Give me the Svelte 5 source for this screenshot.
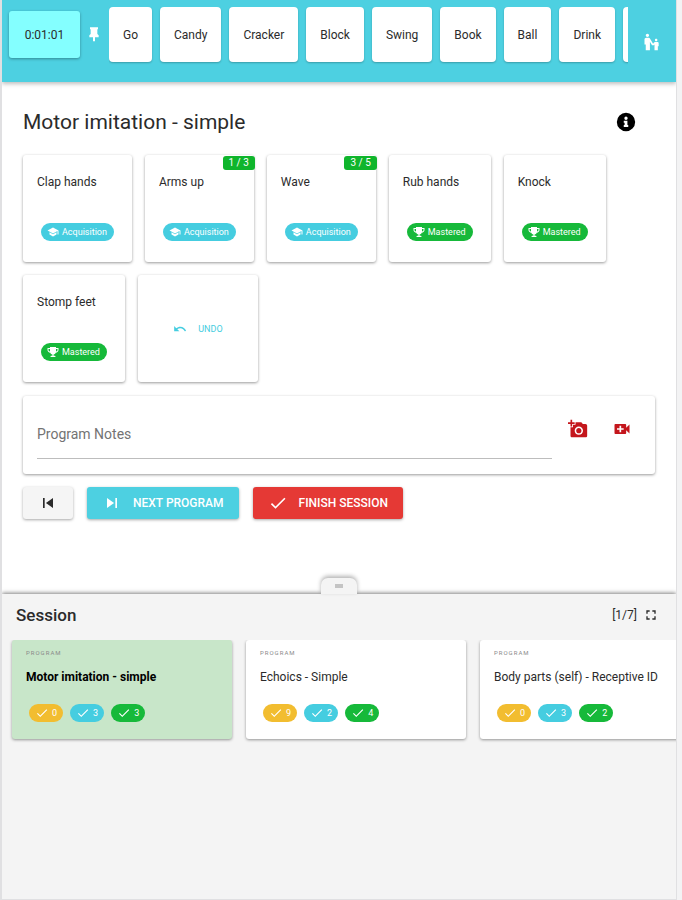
<script lang="ts">
  interface Target {
    name: string;
    status: 'acquisition' | 'mastered';
    progress?: string;
  }

  interface Program {
    name: string;
    counts: number[];
  }

  const ICONS = {
    pin: 'M17 12V5h1V2H6v3h1v7l-2 2v3h5.5v6h3v-6H19v-3l-2-2z',
    guardian:
      'M6.5 2c1.1 0 2 .9 2 2s-.9 2-2 2-2-.9-2-2 .9-2 2-2zM15.5 9.5c0 .83.67 1.5 1.5 1.5s1.5-.67 1.5-1.5S17.83 8 17 8s-1.5.67-1.5 1.5zM18.5 12h-2.84c-.58.01-1.14.32-1.45.86l-.92 1.32L9.72 8C9.35 7.37 8.69 7.01 8.01 7H5C3.9 7 3 7.9 3 9v6h1.5v7h5V11.61L12.03 16h2.2l.77-1.1V22h4v-5h1v-3.5c0-.82-.67-1.5-1.5-1.5z',
    info: 'M12 1a11 11 0 1 0 0 22 11 11 0 0 0 0-22zm0 4.5a2 2 0 1 1 0 4 2 2 0 0 1 0-4zM14.7 18H9.3v-2.4h1V13h-1v-2.4h4.4v5h1V18z',
    acquisition:
      'M12 3L1 9l11 6 9-4.91V17h2V9L12 3zM5 12.6v4.6L12 21l7-3.8v-4.6L12 16.4l-7-3.8z',
    mastered:
      'M18 2H6v2H1v4c0 3 2.4 5 5.6 5.4.8 1.9 2.2 3.2 4.2 3.6v2.6H9c-1.600 0-2 1-2 2.400h10c0-1.400-.4-2.400-2-2.400h-1.800V17c2-.4 3.400-1.700 4.200-3.600C20.600 13 23 11 23 8V4h-5V2zM3 6h3v4.800C4.200 10.400 3 9.400 3 8V6zm18 2c0 1.400-1.200 2.400-3 2.800V6h3v2z',
    undo: 'M12.5 8c-2.65 0-5.05 1-6.9 2.6L2 7v9h9l-3.62-3.62c1.39-1.16 3.16-1.88 5.12-1.88 3.54 0 6.55 2.31 7.6 5.5l2.37-.78C21.08 11.03 17.15 8 12.5 8z',
    photo:
      'M3 4V1h2v3h3v2H5v3H3V6H0V4h3zm3 6V7h3V4h7l1.83 2H21c1.1 0 2 .9 2 2v12c0 1.1-.9 2-2 2H5c-1.1 0-2-.9-2-2V10h3zm7 9c2.76 0 5-2.24 5-5s-2.24-5-5-5-5 2.24-5 5 2.24 5 5 5zm-3.2-5c0 1.77 1.43 3.2 3.2 3.2s3.2-1.43 3.2-3.2-1.43-3.2-3.2-3.2-3.2 1.43-3.2 3.2z',
    video:
      'M17 10.5V7c0-.55-.45-1-1-1H4c-.55 0-1 .45-1 1v10c0 .55.45 1 1 1h12c.55 0 1-.45 1-1v-3.5l4 4v-11l-4 4zM14 13h-3v3H9v-3H6v-2h3V8h2v3h3v2z',
    previous: 'M6 6h2v12H6zm3.5 6l8.500 6V6z',
    next: 'M6 18l8.500-6L6 6v12zM16 6v12h2V6h-2z',
    check: 'M9 16.17L4.83 12l-1.42 1.41L9 19 21 7l-1.41-1.41z',
    fullscreen:
      'M7 14H5v5h5v-2H7v-3zm-2-4h2V7h3V5H5v5zm12 7h-3v2h5v-5h-2v3zM14 5v2h3v3h2V5h-5z'
  };

  const pinned = ['Go', 'Candy', 'Cracker', 'Block', 'Swing', 'Book', 'Ball', 'Drink'];

  const targets: Target[] = [
    { name: 'Clap hands', status: 'acquisition' },
    { name: 'Arms up', status: 'acquisition', progress: '1 / 3' },
    { name: 'Wave', status: 'acquisition', progress: '3 / 5' },
    { name: 'Rub hands', status: 'mastered' },
    { name: 'Knock', status: 'mastered' },
    { name: 'Stomp feet', status: 'mastered' }
  ];

  const programs: Program[] = [
    { name: 'Motor imitation - simple', counts: [0, 3, 3] },
    { name: 'Echoics - Simple', counts: [9, 2, 4] },
    { name: 'Body parts (self) - Receptive ID', counts: [0, 3, 2] }
  ];

  const labels = { acquisition: 'Acquisition', mastered: 'Mastered' };
  const tones = ['baseline', 'acquisition', 'mastered'];

  let current = $state(0);
  let notes = $state('');
</script>

{#snippet icon(name: keyof typeof ICONS, size: number)}
  <svg width={size} height={size} viewBox="0 0 24 24" fill="currentColor" aria-hidden="true">
    <path fill-rule="evenodd" d={ICONS[name]} />
  </svg>
{/snippet}

<div class="app">
  <header class="topbar">
    <button class="timer">0:01:01</button>
    <span class="pin">{@render icon('pin', 16)}</span>
    <div class="pinned">
      {#each pinned as item}
        <button class="chip">{item}</button>
      {/each}
      <button class="chip" aria-label="More items"></button>
    </div>
    <button class="icon-button guardian" aria-label="Guardian">{@render icon('guardian', 20)}</button>
  </header>

  <main>
    <div class="title-row">
      <h1>Motor imitation - simple</h1>
      <button class="icon-button" aria-label="Program info">{@render icon('info', 20)}</button>
    </div>

    <div class="targets">
      {#each targets as target}
        <button class="card target">
          <span>{target.name}</span>
          <span class="badge {target.status}">
            {@render icon(target.status, 12)}
            {labels[target.status]}
          </span>
          {#if target.progress}
            <span class="progress">{target.progress}</span>
          {/if}
        </button>
      {/each}
      <button class="card undo">
        {@render icon('undo', 14)}
        UNDO
      </button>
    </div>

    <div class="card notes">
      <input type="text" placeholder="Program Notes" aria-label="Program Notes" bind:value={notes} />
      <button class="icon-button" aria-label="Add photo">{@render icon('photo', 20)}</button>
      <button class="icon-button" aria-label="Add video">{@render icon('video', 20)}</button>
    </div>

    <div class="actions">
      <button class="action" aria-label="Previous program" onclick={() => (current = Math.max(0, current - 1))}>
        {@render icon('previous', 20)}
      </button>
      <button class="action next" onclick={() => (current = Math.min(programs.length - 1, current + 1))}>
        {@render icon('next', 20)}
        NEXT PROGRAM
      </button>
      <button class="action finish">
        {@render icon('check', 20)}
        FINISH SESSION
      </button>
    </div>
  </main>

  <section class="session">
    <button class="handle" aria-label="Resize session panel"><span></span></button>
    <div class="session-head">
      <h2>Session</h2>
      <span>[{current + 1}/7]</span>
      <button class="icon-button" aria-label="Full screen">{@render icon('fullscreen', 16)}</button>
    </div>
    <div class="programs">
      {#each programs as program, i}
        <button class="card program" class:active={i === current} onclick={() => (current = i)}>
          <span class="overline">PROGRAM</span>
          <span class="name">{program.name}</span>
          <span class="counts">
            {#each program.counts as count, j}
              <span class="badge count {tones[j]}">{@render icon('check', 14)}{count}</span>
            {/each}
          </span>
        </button>
      {/each}
    </div>
  </section>
</div>

<style>
  :global(body) {
    background: #f3f3f4;
  }

  .app {
    display: flex;
    flex-direction: column;
    box-sizing: border-box;
    min-height: 100vh;
    margin-right: 5px;
    border: solid #e0e0e2;
    border-width: 0 1px 1px 2px;
    overflow: hidden;
    background: #fff;
    color: #2b2b2b;
    font: 12px/16px Roboto, sans-serif;
  }

  button {
    padding: 0;
    border: 0;
    background: none;
    color: inherit;
    font: inherit;
    cursor: pointer;
  }

  svg {
    display: block;
    flex: none;
  }

  h1,
  h2 {
    margin: 0;
    flex: 1;
  }

  .topbar {
    display: flex;
    align-items: flex-start;
    height: 75px;
    padding: 7px 14px 0 7px;
    background: #4dd0e1;
    box-shadow: 0 2px 4px rgba(0, 0, 0, 0.25);
  }

  .timer {
    width: 71px;
    height: 47px;
    margin-top: 4px;
    border-radius: 3px;
    background: #84ffff;
    box-shadow: 0 1px 3px rgba(0, 0, 0, 0.35);
  }

  .pin {
    padding: 19px 7px 0 6px;
    color: #fff;
  }

  .pinned {
    display: flex;
    flex: 1;
    gap: 8px;
    height: 60px;
    margin-right: 14px;
    overflow: hidden;
  }

  .chip {
    flex: none;
    height: 55px;
    padding: 0 14px;
    border-radius: 4px;
    background: #fff;
    box-shadow: 0 1px 2px rgba(0, 0, 0, 0.25);
  }

  .icon-button {
    display: grid;
    place-items: center;
  }

  .guardian {
    height: 70px;
    color: #fff;
  }

  main {
    flex: 1;
    padding: 26px 21px;
  }

  .title-row {
    display: flex;
    align-items: center;
    margin-bottom: 19px;
    padding-right: 19px;
    color: #000;
  }

  h1 {
    color: #2b2b2b;
    font-size: 21px;
    font-weight: 400;
    line-height: 28px;
  }

  .card {
    border-radius: 3px;
    background: #fff;
    box-shadow: 0 1px 3px rgba(0, 0, 0, 0.4);
  }

  .targets {
    display: flex;
    flex-wrap: wrap;
    gap: 13px;
  }

  .target {
    position: relative;
    display: flex;
    flex-direction: column;
    align-items: flex-start;
    justify-content: space-between;
    box-sizing: border-box;
    height: 107px;
    padding: 19px 14px 21px;
  }

  .badge {
    display: flex;
    align-items: center;
    gap: 3px;
    height: 18px;
    margin: 0 4px;
    padding: 0 7px 0 6px;
    border-radius: 9px;
    color: #fff;
    font-size: 9px;
  }

  .acquisition {
    background: #45cde0;
  }

  .mastered {
    background: #16b93a;
  }

  .baseline {
    background: #f2bd30;
  }

  .progress {
    position: absolute;
    top: 1px;
    right: -1px;
    padding: 0 6px;
    border-radius: 3px;
    background: #0fb52c;
    color: #fff;
    font-size: 10px;
    line-height: 14px;
  }

  .undo {
    display: flex;
    align-items: center;
    justify-content: center;
    gap: 11px;
    width: 120px;
    height: 107px;
    color: #45cde0;
    font-size: 9px;
  }

  .notes {
    display: flex;
    align-items: flex-start;
    gap: 24px;
    box-sizing: border-box;
    height: 78px;
    margin: 14px 0 13px;
    padding: 14px 23px 0 14px;
    color: #c4161c;
  }

  .notes input {
    flex: 1;
    min-width: 0;
    height: 48px;
    margin-right: -8px;
    padding: 0;
    border: 0;
    border-bottom: 1px solid #bdbdbd;
    outline: none;
    background: none;
    color: #2b2b2b;
    font: 14px Roboto, sans-serif;
  }

  .notes input::placeholder {
    color: #737373;
    opacity: 1;
  }

  .notes .icon-button {
    height: 38px;
  }

  .actions {
    display: flex;
    gap: 14px;
  }

  .action {
    display: flex;
    align-items: center;
    gap: 11px;
    height: 32px;
    padding: 0 15px;
    border-radius: 3px;
    background: #f5f5f5;
    box-shadow: 0 1px 3px rgba(0, 0, 0, 0.35);
    font-weight: 500;
  }

  .next {
    background: #4dd0e1;
    color: #fff;
  }

  .finish {
    background: #e53935;
    color: #fff;
  }

  .session {
    position: relative;
    min-height: 305px;
    background: #f4f4f4;
    box-shadow: 0 -1px 4px rgba(0, 0, 0, 0.5);
  }

  .handle {
    position: absolute;
    bottom: 100%;
    left: 50%;
    display: grid;
    place-items: center;
    width: 36px;
    height: 16px;
    border-radius: 7px 7px 0 0;
    background: #f4f4f4;
    box-shadow: 0 -2px 4px rgba(0, 0, 0, 0.3);
    transform: translateX(-50%);
  }

  .handle span {
    width: 8px;
    height: 4px;
    background: #c4c4c4;
  }

  .session-head {
    display: flex;
    align-items: center;
    gap: 6px;
    padding: 10px 17px 14px 14px;
  }

  h2 {
    font-size: 17px;
    font-weight: 500;
    line-height: 22px;
  }

  .programs {
    display: flex;
    gap: 14px;
    padding: 0 10px 4px;
    overflow: hidden;
  }

  .program {
    display: flex;
    flex: none;
    flex-direction: column;
    align-items: flex-start;
    box-sizing: border-box;
    width: 220px;
    height: 99px;
    padding: 9px 14px;
    white-space: nowrap;
  }

  .active {
    background: #c8e6c9;
  }

  .active .name {
    color: #000;
    font-weight: 700;
  }

  .overline {
    margin-bottom: 12px;
    color: #8a8a8a;
    font-size: 6px;
    letter-spacing: 1px;
    line-height: 8px;
  }

  .name {
    margin-bottom: 19px;
  }

  .counts {
    display: flex;
    gap: 7px;
    margin-left: 3px;
  }

  .count {
    gap: 3px;
    margin: 0;
    padding: 0 6px;
  }
</style>
